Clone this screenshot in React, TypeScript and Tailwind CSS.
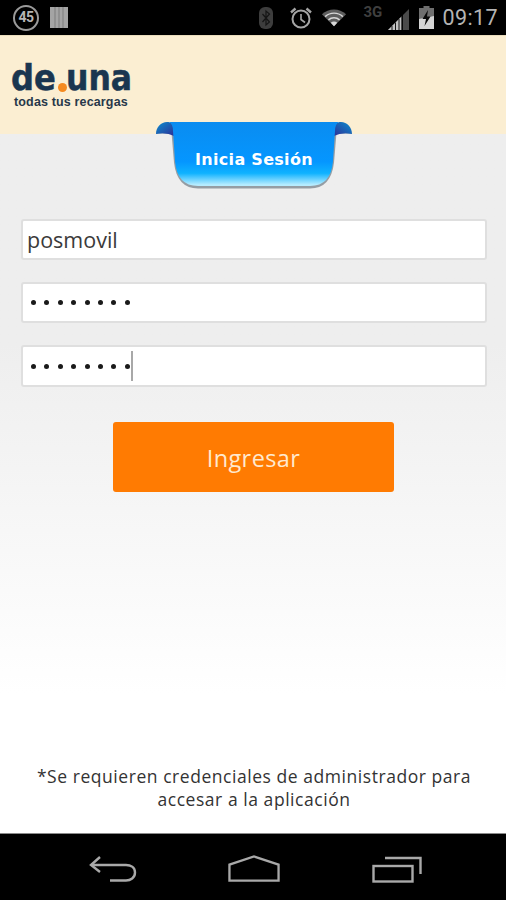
import React from "react";

function Field({ value, dots, caret, tall }: { value?: string; dots?: number; caret?: boolean; tall?: boolean }) {
  return (
    <div className={`rounded-[3px] border-2 border-[#dfdfdf] bg-white flex items-center pl-[4px] ${tall ? "h-[42px]" : "h-[41px]"}`}>
      {value && <span className="text-[21.5px] leading-none text-[#3a3a3a]">{value}</span>}
      {dots && (
        <div className="flex items-center gap-[8.4px] pl-[4px]">
          {Array.from({ length: dots }).map((_, i) => (
            <span key={i} className="block w-[5px] h-[5px] rounded-full bg-[#1a1a1a]" />
          ))}
        </div>
      )}
      {caret && <span className="block w-[2px] h-[30px] bg-[#a8a8a8] ml-[1px]" />}
    </div>
  );
}

function StatusBar() {
  return (
    <div className="h-[35px] bg-black flex items-center justify-between pl-[13px] pr-[8px] shrink-0">
      <div className="flex items-center gap-[11px]">
        <div className="w-[26px] h-[26px] rounded-full border-2 border-[#9a9a9a] flex items-center justify-center text-[14px] font-bold text-[#b5b5b5] tracking-[-0.5px] [font-family:Roboto,sans-serif]">
          45
        </div>
        <svg width="18" height="21" viewBox="0 0 18 21">
          <rect width="18" height="21" fill="#a4a4a4" />
          <path d="M5 0v21M9 0v21M13 0v21" stroke="#7c7c7c" strokeWidth="1" />
        </svg>
      </div>
      <div className="flex items-center">
        <svg width="16" height="24" viewBox="0 0 16 24" className="mr-[15px]">
          <rect x="1" y="1" width="14" height="22" rx="6" fill="#3d3d3d" />
          <path d="M4.5 8l7 8-3.5 3V5l3.5 3-7 8" fill="none" stroke="#151515" strokeWidth="1.2" />
        </svg>
        <svg width="24" height="24" viewBox="0 0 24 24" fill="none" stroke="#a5a5a5" className="mr-[8px]">
          <circle cx="12" cy="13" r="8.5" strokeWidth="2" />
          <path d="M12 8v5.5l4 3" strokeWidth="1.6" />
          <path d="M2 6.5L6.5 2.5M22 6.5L17.5 2.5" strokeWidth="2.4" />
        </svg>
        <svg width="26" height="20" viewBox="0 0 28 20" fill="none" className="mr-[16px]">
          <path d="M14 19L1 6C8-1 20-1 27 6Z" fill="#5e5e5e" />
          <path d="M4.5 8.5C10 3.5 18 3.5 23.5 8.5" stroke="#d8d8d8" strokeWidth="1.6" />
          <path d="M8 12C11.5 9 16.5 9 20 12" stroke="#d8d8d8" strokeWidth="1.6" />
          <path d="M14 19L10.5 15C12.5 13.4 15.5 13.4 17.5 15Z" fill="#d8d8d8" />
        </svg>
        <div className="relative w-[24px] h-[24px]">
          <span className="absolute left-0 top-[-1px] text-[15px] font-bold leading-none text-[#3f3f3f] [font-family:Roboto,sans-serif]">3G</span>
        </div>
        <svg width="24" height="22" viewBox="0 0 22 22" className="mr-[8px] mt-[4px]">
          <path d="M0 21L21 0V21Z" fill="#4a4a4a" />
          <path d="M0 21L13 8V21Z" fill="#c2c2c2" />
          <path d="M4 21V17M7.5 21V13.5M11 21V10M14.5 21V6" stroke="#000" strokeWidth="0.9" />
        </svg>
        <svg width="15" height="23" viewBox="0 0 15 23" className="mr-[8px]">
          <path d="M4.5 0h6v2H15v21H0V2h4.500Z" fill="#6f6f6f" />
          <path d="M0 13L15 10V23H0Z" fill="#d4d4d4" />
          <path d="M9 4L3.500 13H7L5.500 20L11.500 10.500H8Z" fill="#0a0a0a" />
        </svg>
        <span className="text-[21.5px] leading-none text-[#b4b4b4] tracking-[0.4px] [font-family:Roboto,sans-serif]">09:17</span>
      </div>
    </div>
  );
}

function Logo() {
  return (
    <div className="flex flex-col items-start ml-[11px] mt-[2px]">
      <div className="relative h-[31px] w-[120px] flex items-end text-[35px] leading-[31px] font-bold text-[#1a3650] [font-family:'DejaVu_Sans',sans-serif] [-webkit-text-stroke:0.5px_#1a3650]">
        <span className="inline-block origin-left scale-x-[0.92] w-[47px] shrink-0">de</span>
        <span className="block w-[9px] h-[9px] rounded-full bg-[#f58a1f] mb-[2px] mr-[-1px] shrink-0" />
        <span className="inline-block origin-left scale-x-[0.9] shrink-0">una</span>
      </div>
      <span className="text-[12.5px] leading-[14px] font-bold text-[#27384a] ml-[3px] mt-[1px] tracking-[0.15px] whitespace-nowrap [font-family:'Liberation_Sans',sans-serif]">
        todas tus recargas
      </span>
    </div>
  );
}

function Ribbon() {
  return (
    <div className="absolute left-[155px] top-[121px] w-[198px] h-[70px]">
      <svg width="198" height="70" viewBox="0 0 198 70" className="absolute inset-0">
        <defs>
          <linearGradient id="rb" x1="0" y1="0" x2="0" y2="1">
            <stop offset="0" stopColor="#0a8cf0" />
            <stop offset="0.62" stopColor="#0596ff" />
            <stop offset="0.8" stopColor="#0fb2ff" />
            <stop offset="0.98" stopColor="#b6ecff" />
          </linearGradient>
          <linearGradient id="cl" x1="0" y1="0" x2="1" y2="1">
            <stop offset="0" stopColor="#0c8fcf" />
            <stop offset="1" stopColor="#2d2e96" />
          </linearGradient>
          <linearGradient id="cr" x1="1" y1="0" x2="0" y2="1">
            <stop offset="0" stopColor="#0c8fcf" />
            <stop offset="1" stopColor="#2d2e96" />
          </linearGradient>
        </defs>
        <path d="M16 4H182L179 40Q176 66 155 66H43Q22 66 19 40Z" fill="#6f7a85" opacity="0.7" transform="translate(0 1.500)" />
        <path d="M1 13C1 6 6 1 12 1C16 1 19 3 19 8V15C14 12 6 12 1 13Z" fill="url(#cl)" />
        <path d="M197 13C197 6 192 1 186 1C182 1 179 3 179 8V15C184 12 192 12 197 13Z" fill="url(#cr)" />
        <path d="M14 1H184Q180 3 180 10L178 40Q176 65 155 65H43Q22 65 20 40L18 10Q18 3 14 1Z" fill="url(#rb)" />
      </svg>
      <div className="absolute left-0 right-0 top-[29px] text-center text-[16.5px] leading-[20px] font-bold text-white tracking-[0.3px] [font-family:'DejaVu_Sans',sans-serif] scale-x-[0.97]">
        Inicia Sesión
      </div>
    </div>
  );
}

function NavBar() {
  return (
    <div className="h-[67px] bg-black flex items-start pt-[22px] shrink-0 border-t-[1px] border-[#8a8a8a]">
      <div className="ml-[89px]">
        <svg width="48" height="27" viewBox="0 0 48 27" fill="none" stroke="#a9a9a9" strokeWidth="2.4">
          <path d="M11 1L2 9L11 16" />
          <path d="M2 9H37C41.500 9 46 11 46 16.500C46 22 41.500 24.500 37 24.500H21" />
        </svg>
      </div>
      <div className="ml-[91px] mt-[-1px]">
        <svg width="52" height="27" viewBox="0 0 54 28" fill="none" stroke="#a9a9a9" strokeWidth="2.4">
          <path d="M1.500 26.500V10L27 1.500L52.500 10V26.500Z" />
        </svg>
      </div>
      <div className="ml-[92px]">
        <svg width="50" height="27" viewBox="0 0 50 27" fill="none" stroke="#a9a9a9" strokeWidth="2.4">
          <rect x="1.500" y="10" width="39" height="15.500" />
          <path d="M13 2H48.500V18" />
        </svg>
      </div>
    </div>
  );
}

export default function App() {
  return (
    <div className="relative w-[506px] h-[900px] flex flex-col overflow-hidden bg-black [font-family:'Open_Sans',sans-serif]">
      <StatusBar />
      <div className="h-[99px] shrink-0 bg-[#fbeed2] border-t border-[#e9dcbc] flex items-center">
        <Logo />
      </div>
      <main className="flex-1 flex flex-col pl-[21px] pr-[19px] pt-[85px] bg-gradient-to-b from-[#eeeeee] from-30% to-white to-80%">
        <div className="flex flex-col gap-[22px]">
          <Field value="posmovil" />
          <Field dots={8} />
          <Field dots={8} caret tall />
        </div>
        <button className="mt-[35px] ml-[92px] w-[281px] h-[70px] pt-[4px] rounded-[3px] bg-[#ff7b02] text-[#ffe9cf] text-[23.5px] tracking-[0.4px]">
          Ingresar
        </button>
        <p className="mt-auto mb-[22px] -mx-[4px] text-center text-[17.5px] leading-[23px] text-[#333333] tracking-[0.55px]">
          *Se requieren credenciales de administrador para accesar a la aplicación
        </p>
      </main>
      <NavBar />
      <Ribbon />
    </div>
  );
}
